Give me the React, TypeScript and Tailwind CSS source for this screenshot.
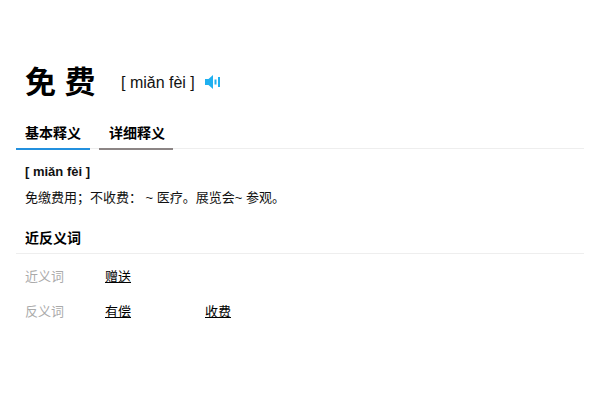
export default function App() {
  const cjk = 'font-["Liberation_Sans","Noto_Sans_CJK_SC",sans-serif]';
  return (
    <div className={`w-[600px] h-[400px] bg-white text-black px-4 pt-[61px] ${cjk}`}>
      <div className="flex items-center h-[44px] pl-[9px]">
        <h1 className="text-[31px] leading-[46px] font-bold w-[96px] whitespace-nowrap">免 费</h1>
        <span className="text-[16px] leading-[44px] text-[#111]">[ miǎn fèi ]</span>
        <svg className="ml-[10px] -mt-[2px]" width="16" height="16" viewBox="0 0 16 16" fill="#1fb0f0">
          <path d="M0 5h3.500L8 1v14L3.500 11H0z" />
          <rect x="9.500" y="5.500" width="2" height="5" />
          <rect x="13" y="3" width="2" height="10" />
        </svg>
      </div>
      <div className="flex h-[28px] mt-[16px] border-b border-[#eeeeee]">
        <div className="w-[74px] h-[29px] border-b-2 border-[#2390de] pl-[9px] text-[14px] leading-[24px] font-bold">基本释义</div>
        <div className="w-[74px] h-[29px] ml-[9px] border-b-2 border-[#8c8585] pl-[10px] text-[14px] leading-[24px] font-bold">详细释义</div>
      </div>
      <div className="pl-[9px]">
        <div className="mt-[13px] text-[13px] leading-[20px] font-bold text-[#111]">[ miǎn fèi ]</div>
        <p className="mt-[6px] text-[13px] leading-[20px] text-[#111] whitespace-pre">免缴费用；不收费： ~ 医疗。展览会~ 参观。</p>
      </div>
      <div className="mt-[20px] h-[26px] border-b border-[#eeeeee] pl-[9px] text-[14px] leading-[20px] font-bold">近反义词</div>
      <div className="mt-[13px] pl-[9px] flex flex-col gap-[15px] text-[13px] leading-[20px]">
        <div className="flex">
          <span className="w-[80px] text-[#aaaaaa]">近义词</span>
          <a className="underline text-black">赠送</a>
        </div>
        <div className="flex">
          <span className="w-[80px] text-[#aaaaaa]">反义词</span>
          <a className="underline text-black w-[100px]">有偿</a>
          <a className="underline text-black">收费</a>
        </div>
      </div>
    </div>
  );
}
